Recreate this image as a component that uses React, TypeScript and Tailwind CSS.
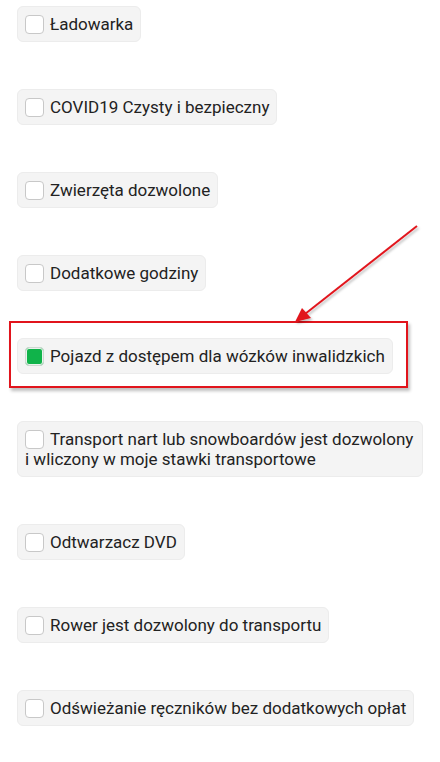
import { useState } from 'react';

const options = [
  { id: 'charger', label: 'Ładowarka' },
  { id: 'covid', label: 'COVID19 Czysty i bezpieczny' },
  { id: 'pets', label: 'Zwierzęta dozwolone' },
  { id: 'hours', label: 'Dodatkowe godziny' },
  { id: 'wheelchair', label: 'Pojazd z dostępem dla wózków inwalidzkich' },
  { id: 'ski', label: 'Transport nart lub snowboardów jest dozwolony i wliczony w moje stawki transportowe' },
  { id: 'dvd', label: 'Odtwarzacz DVD' },
  { id: 'bike', label: 'Rower jest dozwolony do transportu' },
  { id: 'towels', label: 'Odświeżanie ręczników bez dodatkowych opłat' },
];

function Option({ label, checked, onToggle }: { label: string; checked: boolean; onToggle: () => void }) {
  return (
    <label
      onClick={onToggle}
      className="inline-block max-w-full cursor-pointer rounded-md border border-[#ececec] bg-[#f4f4f4] px-[7px] py-[7px] text-[17px] leading-[20px] text-[#222]"
    >
      <span
        className={
          'mr-[6px] inline-block h-[19px] w-[19px] rounded-[4px] border align-[-4px] ' +
          (checked ? 'border-[#cfd8d2] bg-[#10b34a] shadow-[inset_0_0_0_1px_#e9f3ec]' : 'border-[#c8c8c8] bg-white')
        }
      />
      {label}
    </label>
  );
}

export default function App() {
  const [checked, setChecked] = useState<Record<string, boolean>>({ wheelchair: true });

  return (
    <main className="relative min-h-[762px] bg-white" style={{ fontFamily: 'Roboto, "Noto Sans", sans-serif' }}>
      <div className="flex flex-col items-start gap-[47px] px-[17px] pt-[6px]">
        {options.map((o) => (
          <div key={o.id} className={o.id === 'wheelchair' ? 'relative' : ''}>
            {o.id === 'wheelchair' && (
              <div className="pointer-events-none absolute -left-[8px] -top-[17px] h-[67px] w-[399px] border-2 border-[#e1141c] shadow-[2px_3px_3px_rgba(0,0,0,0.25)]" />
            )}
            <Option
              label={o.label}
              checked={!!checked[o.id]}
              onToggle={() => setChecked((c) => ({ ...c, [o.id]: !c[o.id] }))}
            />
          </div>
        ))}
      </div>

      {/* annotation arrow */}
      <svg className="pointer-events-none absolute left-0 top-0" width="440" height="762">
        <defs>
          <filter id="sh" x="-10%" y="-10%" width="130%" height="130%">
            <feDropShadow dx="1.5" dy="2" stdDeviation="1.2" floodOpacity="0.25" />
          </filter>
        </defs>
        <g filter="url(#sh)">
          <line x1="417" y1="226" x2="305" y2="314" stroke="#e1141c" strokeWidth="2" />
          <polygon points="295,322 302,308 311,318" fill="#e1141c" />
        </g>
      </svg>
    </main>
  );
}
